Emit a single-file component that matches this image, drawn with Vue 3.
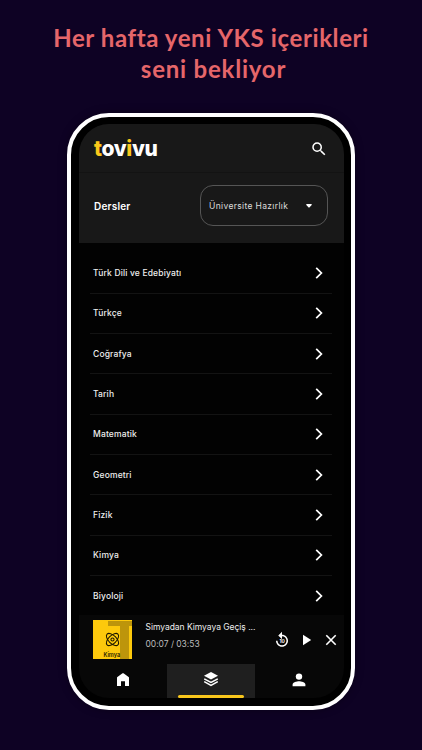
<script setup>
const lessons = ['Türk Dili ve Edebiyatı', 'Türkçe', 'Coğrafya', 'Tarih', 'Matematik', 'Geometri', 'Fizik', 'Kimya', 'Biyoloji']
</script>

<template>
  <main class="poster">
    <h1 class="headline"><span class="line-a">Her hafta yeni YKS içerikleri</span><br><span class="line-b">seni bekliyor</span></h1>
    <div class="phone">
      <div class="screen">
        <header class="topbar">
          <div class="logo"><b>t</b>ov<b>i</b>vu</div>
          <svg class="search" viewBox="0 0 24 24"><path d="M15.5 14h-.79l-.28-.27A6.47 6.47 0 0 0 16 9.500 6.500 6.500 0 1 0 9.500 16c1.610 0 3.090-.59 4.230-1.570l.27.28v.79l5 4.990L20.490 19l-4.990-5zm-6 0C7.010 14 5 11.990 5 9.500S7.010 5 9.500 5 14 7.010 14 9.500 11.990 14 9.500 14z" /></svg>
        </header>
        <section class="filter">
          <h2>Dersler</h2>
          <div class="select">
            <span>Üniversite Hazırlık</span>
            <svg viewBox="0 0 8 6"><path d="M2 1h4q1.300 0 .7 1L4.600 4.300Q4 5 3.400 4.300L1.300 2Q.7 1 2 1z" /></svg>
          </div>
        </section>
        <ul class="lessons">
          <li v-for="lesson in lessons" :key="lesson">
            <span>{{ lesson }}</span>
            <svg viewBox="0 0 8 12"><path d="M1.200 .8 6.400 6 1.200 11.200" /></svg>
          </li>
        </ul>
        <section class="player">
          <div class="cover">
            <svg class="shade" viewBox="0 0 39 39"><path d="M15 1h24v5h-3v33h-9V6H15z" /></svg>
            <svg class="atom" viewBox="0 0 16 16">
              <ellipse cx="8" cy="8" rx="8.200" ry="4.200" transform="rotate(45 8 8)" />
              <ellipse cx="8" cy="8" rx="8.200" ry="4.200" transform="rotate(-45 8 8)" />
              <circle cx="8" cy="8" r="1.700" />
            </svg>
            <span>Kimya</span>
          </div>
          <div class="track">
            <p class="name">Simyadan Kimyaya Geçiş ...</p>
            <p class="time">00:07 / 03:53</p>
          </div>
          <div class="controls">
            <svg class="replay" viewBox="0 0 24 24">
              <path d="M12 5V1L7 6l5 5V7c3.310 0 6 2.690 6 6s-2.690 6-6 6-6-2.690-6-6H4c0 4.420 3.580 8 8 8s8-3.580 8-8-3.580-8-8-8z" />
              <text x="12.200" y="15.600">10</text>
            </svg>
            <svg class="play" viewBox="0 0 10 12"><path d="M1 .8v10.400L9.200 6z" /></svg>
            <svg class="close" viewBox="0 0 12 12"><path d="M1.300 1.300l9.400 9.400M10.700 1.300l-9.400 9.400" /></svg>
          </div>
        </section>
        <nav class="tabs">
          <div class="tab">
            <svg class="home" viewBox="0 0 12 13"><path d="M0 4.800Q0 4.300.4 4L5.500.3Q6 0 6.500.3L11.600 4q.4.3.4.8V13H8V8.200H4V13H0z" /></svg>
          </div>
          <div class="tab active">
            <svg class="layers" viewBox="0 0 16 16">
              <path class="solid" d="M8 1 15 4.800 8 8.600 1 4.800z" />
              <path class="edge" d="M1.200 7.800 8 11.400l6.800-3.600M1.200 10.700 8 14.300l6.800-3.600" />
            </svg>
          </div>
          <div class="tab">
            <svg class="person" viewBox="0 0 14 14"><circle cx="7" cy="3.600" r="3.200" /><path d="M.6 13.200v-1.700c0-2.100 4.200-3.200 6.400-3.200s6.400 1.100 6.400 3.200v1.700z" /></svg>
          </div>
        </nav>
      </div>
    </div>
  </main>
</template>

<style>
body { margin: 0; background: #0e0224; }
</style>

<style scoped>
* { box-sizing: border-box; }
h1, h2, p, ul { margin: 0; padding: 0; }
svg { display: block; flex: none; fill: #fff; }
.poster {
  height: 750px; overflow: hidden; background: #0e0224;
  display: flex; flex-direction: column; align-items: center;
  font-family: Inter, "Noto Sans", sans-serif; color: #fff;
}
.headline {
  height: 113px; flex: none; padding-top: 22px; text-align: center; white-space: nowrap;
  font: 700 24px/31px Lato, "Open Sans", sans-serif; color: #e5666a; letter-spacing: .6px;
}
.line-b { letter-spacing: .78px; padding-left: 5px; }
.phone {
  width: 288px; height: 597px; flex: none; padding: 7px 7px 7px 8px; border: 4px solid #fff;
  border-radius: 42px; background: #000; box-shadow: 0 0 9px rgba(0, 0, 0, .35);
}
.screen {
  width: 265px; height: 574px; overflow: hidden; border-radius: 30px; background: #020202;
  display: flex; flex-direction: column;
}
.topbar {
  height: 49px; flex: none; padding: 1px 16px 0 15px; background: #181818; border-bottom: 1px solid #131313;
  display: flex; align-items: center; justify-content: space-between;
}
.logo { font: 800 21px/28px Inter, sans-serif; letter-spacing: -.35px; }
.logo b { color: #fbc91b; font-weight: 800; }
.search { width: 18px; height: 18px; }
.filter {
  height: 70px; flex: none; padding: 0 16px 5px 15px; background: #181818;
  display: flex; align-items: center; justify-content: space-between;
}
.filter h2 { font-size: 10px; line-height: 14px; font-weight: 600; letter-spacing: .2px; }
.select {
  width: 128px; height: 41px; padding: 0 14px 0 8px; border: 1px solid #555; border-radius: 13px;
  display: flex; align-items: center; justify-content: space-between;
}
.select span { font-size: 8.500px; letter-spacing: .34px; color: #ddd; white-space: nowrap; }
.select svg { width: 8px; height: 6px; }
.lessons { height: 372px; flex: none; padding: 10.500px 12px 0 11px; list-style: none; overflow: hidden; }
.lessons li {
  height: 40.300px; padding: 0 9px 0 3px; border-bottom: 1px solid #131313;
  display: flex; align-items: center; justify-content: space-between;
}
.lessons li:last-child { border-bottom: 0; }
.lessons span { font-size: 8.500px; font-weight: 500; letter-spacing: .15px; color: #eee; }
.lessons svg { width: 8px; height: 12px; fill: none; stroke: #fff; stroke-width: 1.750; }
.player { height: 49px; flex: none; padding: 5px 7px 5px 14px; background: #070707; display: flex; }
.cover { width: 39px; height: 39px; flex: none; position: relative; background: #fdc90c; color: #2a2100; }
.shade { position: absolute; inset: 0; width: 39px; height: 39px; fill: #bd950b; }
.atom { position: absolute; left: 12px; top: 12px; width: 15px; height: 15px; fill: none; stroke: #1c1700; stroke-width: 1.100; }
.cover span { position: absolute; left: 10.500px; bottom: 1px; font-size: 5.500px; line-height: 6px; font-weight: 600; }
.track { flex: none; padding: 0 0 0 13.500px; white-space: nowrap; }
.track p { font-size: 8.500px; line-height: 14px; color: #eee; letter-spacing: -.03px; }
.track .time { margin-top: 3px; color: #bbb; }
.controls { display: flex; align-items: center; margin-left: auto; }
.replay { width: 18px; height: 18px; }
.replay text { font: 700 6.500px Inter, sans-serif; text-anchor: middle; }
.play { width: 10px; height: 12px; margin-left: 11px; }
.close { width: 12px; height: 12px; margin-left: 13px; fill: none; stroke: #fff; stroke-width: 1.600; }
.tabs { height: 34px; flex: none; display: grid; grid-template-columns: 88px 88px 89px; background: #070707; }
.tab { display: flex; align-items: flex-start; justify-content: center; padding-top: 9px; position: relative; }
.tab:last-child { padding-right: 1px; }
.active { background: #1f1f1f; padding-top: 7px; }
.active::after { content: ""; position: absolute; left: 11px; right: 11px; bottom: 0; height: 3px; border-radius: 2px; background: #f8c61c; }
.home { width: 12px; height: 13px; }
.layers { width: 16px; height: 16px; }
.layers .edge { fill: none; stroke: #fff; stroke-width: 1.500; }
.person { width: 14px; height: 14px; }
</style>
